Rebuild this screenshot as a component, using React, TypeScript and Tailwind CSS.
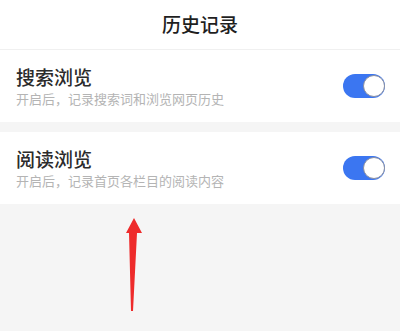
import React, { useState } from 'react'

function Toggle({ on, onClick }: { on: boolean; onClick: () => void }) {
  return (
    <button
      onClick={onClick}
      className={`relative w-[42px] h-[24px] rounded-full shrink-0 ${on ? 'bg-[#3b76f1]' : 'bg-[#e3e3e3]'}`}
    >
      <span
        className={`absolute top-[1px] w-[22px] h-[22px] rounded-full bg-white border border-[#8a8fa0] ${on ? 'right-[0px]' : 'left-[0px]'}`}
      />
    </button>
  )
}

function Row({ title, desc, on, onClick }: { title: string; desc: string; on: boolean; onClick: () => void }) {
  return (
    <div className="bg-white h-[72px] pl-4 pr-[15px] flex items-center justify-between">
      <div className="flex flex-col">
        <div className="text-[19px] leading-[24px] text-[#2b2b2b] font-medium">{title}</div>
        <div className="text-[13px] leading-[18px] mt-[1px] text-[#b4b4b4]">{desc}</div>
      </div>
      <Toggle on={on} onClick={onClick} />
    </div>
  )
}

export default function App() {
  const [search, setSearch] = useState(true)
  const [read, setRead] = useState(true)

  return (
    <div
      className="relative w-[400px] h-[331px] bg-[#f5f5f5] overflow-hidden"
      style={{ fontFamily: '"Noto Sans CJK SC", "Noto Sans", sans-serif' }}
    >
      <div className="bg-white h-[50px] flex items-center justify-center border-b border-[#f0f0f0]">
        <span className="text-[19px] font-medium text-[#1f1f1f]">历史记录</span>
      </div>
      <Row title="搜索浏览" desc="开启后，记录搜索词和浏览网页历史" on={search} onClick={() => setSearch(!search)} />
      <div className="h-[10px]" />
      <Row title="阅读浏览" desc="开启后，记录首页各栏目的阅读内容" on={read} onClick={() => setRead(!read)} />

      {/* red annotation arrow */}
      <svg className="absolute left-0 top-0 pointer-events-none" width="400" height="331">
        <polygon points="134,218 142,233 137,233 133,311 131,311 129,233 126,233" fill="#ee2b2b" />
      </svg>
    </div>
  )
}
